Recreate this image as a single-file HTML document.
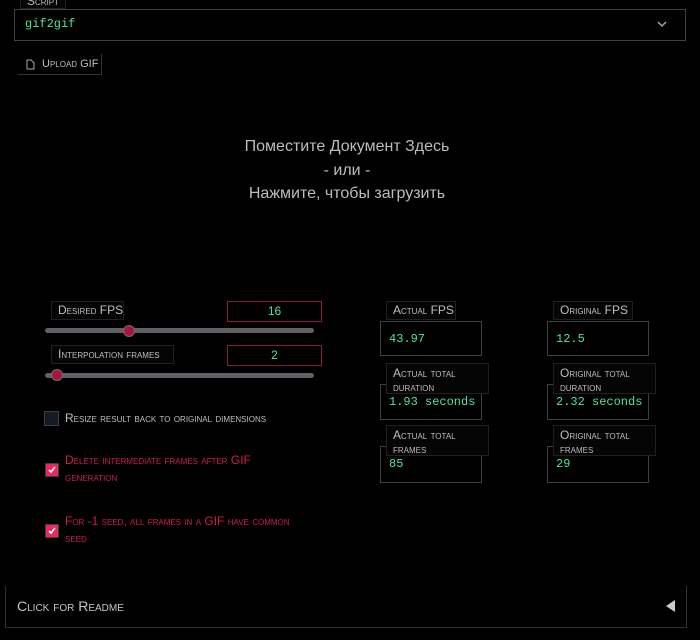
<!DOCTYPE html>
<html><head><meta charset="utf-8"><style>
body{margin:0;width:700px;height:640px;background:#000;position:relative;overflow:hidden;font-family:"Liberation Sans","DejaVu Sans",sans-serif;color:#c8c8c8}
.a{position:absolute;white-space:nowrap}
.sc{font-variant:small-caps;font-size:12px;color:#bdbdbd}
.lbl{position:absolute;border:1px solid #1e2026;background:#050505;box-sizing:border-box;padding:2px 6px;line-height:13px;white-space:nowrap}
.box{position:absolute;border:1px solid #3a3f4c;box-sizing:border-box}
.mono{font-family:"Liberation Mono","DejaVu Sans Mono",monospace;color:#4fe39a;font-size:12px}
.num{position:absolute;border:1px solid #8e1a3c;box-sizing:border-box;text-align:center;line-height:18px;color:#4fe39a;font-size:12px}
.track{position:absolute;height:5px;border-radius:3px;background:#5e6065}
.thumb{position:absolute;width:12px;height:12px;border-radius:50%;background:#a8163f;border:1px solid #6e6e6e;box-sizing:border-box}
.cb{position:absolute;width:12px;height:12px;background:#ea2a5e;border:1px solid #3b3f4a;border-radius:1px}
.red{position:absolute;color:#cf1c4e;font-variant:small-caps;font-size:12px;line-height:17px}
</style></head><body>
<div class="box" style="left:14px;top:9px;width:672px;height:32px"></div>
<div class="lbl sc" style="left:20px;top:-6px;height:15px;padding:0 6px;line-height:13px">Script</div>
<div class="a mono" style="left:25px;top:17px;font-size:12px">gif2gif</div>
<svg class="a" style="left:656px;top:20px" width="12" height="8"><path d="M2 2 L6 6 L10 2" stroke="#9aa" stroke-width="1.5" fill="none"/></svg>
<div class="box" style="left:18px;top:54px;width:84px;height:21px;border-top:none;border-left:none;border-color:#30343e"></div>
<svg class="a" style="left:26px;top:59px" width="9" height="11"><path d="M1 1 H5 L8 4 V10 H1 Z" stroke="#aaa" fill="none"/></svg>
<div class="a sc" style="left:42px;top:58px;font-size:11px">Upload GIF</div>
<div class="a" style="left:0;width:694px;top:135px;text-align:center;font-size:16px;line-height:23.5px;color:#bcbcbc">Поместите Документ Здесь<br>- или -<br>Нажмите, чтобы загрузить</div>

<div class="lbl sc" style="left:51px;top:301px;width:73px;height:19px">Desired FPS</div>
<div class="num" style="left:227px;top:301px;width:95px;height:21px">16</div>
<div class="track" style="left:45px;top:328px;width:269px"></div>
<div class="thumb" style="left:123px;top:325px"></div>
<div class="lbl sc" style="left:51px;top:345px;width:123px;height:19px">Interpolation frames</div>
<div class="num" style="left:227px;top:345px;width:95px;height:21px">2</div>
<div class="track" style="left:45px;top:373px;width:269px"></div>
<div class="thumb" style="left:51px;top:369px"></div>
<div class="a" style="left:44px;top:411px;width:13px;height:13px;border:1px solid #3b3f4a;background:#141a26"></div>
<div class="a sc" style="left:65px;top:411px">Resize result back to original dimensions</div>

<div class="cb" style="left:45px;top:463px"></div>
<svg class="a" style="left:48px;top:466px" width="8" height="8"><path d="M1 4 L3 6 L7 1" stroke="#fff" stroke-width="1.6" fill="none"/></svg>
<div class="red" style="left:65px;top:452px;width:215px">Delete intermediate frames after GIF generation</div>
<div class="cb" style="left:45px;top:524px"></div>
<svg class="a" style="left:48px;top:527px" width="8" height="8"><path d="M1 4 L3 6 L7 1" stroke="#fff" stroke-width="1.6" fill="none"/></svg>
<div class="red" style="left:65px;top:513px;width:236px">For -1 seed, all frames in a GIF have common seed</div>

<div class="box" style="left:380px;top:321px;width:102px;height:35px"></div>
<div class="lbl sc" style="left:386px;top:301px;width:70px;height:19px">Actual FPS</div>
<div class="a mono" style="left:389px;top:332px">43.97</div>
<div class="box" style="left:547px;top:321px;width:102px;height:35px"></div>
<div class="lbl sc" style="left:553px;top:301px;width:80px;height:19px">Original FPS</div>
<div class="a mono" style="left:556px;top:332px">12.5</div>

<div class="box" style="left:380px;top:384px;width:102px;height:36px"></div>
<div class="lbl sc" style="left:386px;top:363px;width:103px;height:31px;line-height:14px;white-space:normal">Actual total duration</div>
<div class="a mono" style="left:389px;top:395px">1.93 seconds</div>
<div class="box" style="left:547px;top:384px;width:102px;height:36px"></div>
<div class="lbl sc" style="left:553px;top:363px;width:103px;height:31px;line-height:14px;white-space:normal">Original total duration</div>
<div class="a mono" style="left:556px;top:395px">2.32 seconds</div>

<div class="box" style="left:380px;top:446px;width:102px;height:37px"></div>
<div class="lbl sc" style="left:386px;top:425px;width:103px;height:31px;line-height:14px;white-space:normal">Actual total frames</div>
<div class="a mono" style="left:389px;top:457px">85</div>
<div class="box" style="left:547px;top:446px;width:102px;height:37px"></div>
<div class="lbl sc" style="left:553px;top:425px;width:103px;height:31px;line-height:14px;white-space:normal">Original total frames</div>
<div class="a mono" style="left:556px;top:457px">29</div>

<div class="box" style="left:5px;top:586px;width:682px;height:42px;border-top:none;border-color:#2e323c"></div>
<div class="a sc" style="left:17px;top:598px;font-size:14px;color:#c4c4c4">Click for Readme</div>
<svg class="a" style="left:666px;top:600px" width="10" height="12"><path d="M9 0 V12 L0 6 Z" fill="#ccc"/></svg>
</body></html>
